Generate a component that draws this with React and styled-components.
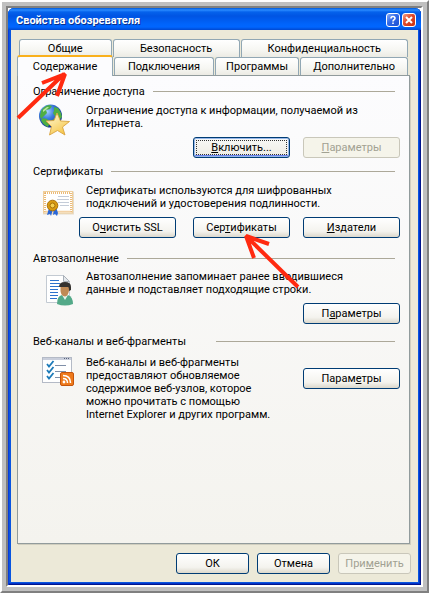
import React from 'react';
import styled, { createGlobalStyle, css } from 'styled-components';

const GlobalStyle = createGlobalStyle`
  * {
    box-sizing: border-box;
  }

  body {
    margin: 0;
    background: #fff;
    color: #000;
    font: 11px/13px Roboto, Tahoma, sans-serif;
  }

  button {
    font: inherit;
    color: inherit;
    padding: 0;
    margin: 0;
  }
`;

const Frame = styled.div`
  position: relative;
  display: flex;
  min-height: 100vh;
  padding: 4px;
  background: #c0c0c0;
  border: 2px solid;
  border-color: #fff #808080 #808080 #fff;
`;

const FrameInner = styled.div`
  flex: 1;
  display: flex;
  min-width: 0;
  border: 2px solid;
  border-color: #808080 #fff #fff #808080;
  background: #fff;
`;

const Window = styled.div`
  flex: 1;
  display: flex;
  flex-direction: column;
  min-width: 0;
  padding: 0 3px 3px;
  border-radius: 6px 6px 0 0;
  background: #0855e0;
  box-shadow: inset 1px 0 #0a3bd8, inset -1px -1px #00138c, inset -2px -2px #0033c8;
`;

const TitleBar = styled.header`
  display: flex;
  align-items: center;
  gap: 2px;
  height: 22px;
  margin: 0 -3px;
  padding: 2px 5px 0 8px;
  border-radius: 6px 6px 0 0;
  background: linear-gradient(#0058d8 0, #2a8bff 2px, #0562ec 4px, #0054e3 8px, #0064fb 16px, #0066ff 19px, #0048d0 22px);
`;

const Title = styled.h1`
  flex: 1;
  margin: 0;
  color: #fff;
  font-size: 11px;
  font-weight: bold;
  white-space: nowrap;
  text-shadow: 1px 1px #0a2f8c;
`;

const CaptionButton = styled.button`
  width: 14px;
  height: 14px;
  border: 1px solid #fff;
  border-radius: 3px;
  background: ${props => (props.$close
    ? 'linear-gradient(135deg, #f0a088, #e0482a 45%, #c83010)'
    : 'linear-gradient(135deg, #8aaef8, #3068e8 45%, #1c50d0)')};

  svg {
    display: block;
  }
`;

const Content = styled.main`
  flex: 1;
  display: flex;
  flex-direction: column;
  padding: 9px 7px 8px 6px;
  background: #ece9d8;
`;

const TabRow = styled.div`
  display: flex;
  gap: 1px;
  height: 18px;
  margin: 0 3px 0 ${props => (props.$front ? 0 : 2)}px;
`;

const Tab = styled.button`
  flex: ${props => props.$grow} 1 0;
  min-width: 0;
  border: 1px solid #91a7b4;
  border-bottom: 0;
  border-radius: 3px 3px 0 0;
  background: linear-gradient(#fff, #f6f6f2 60%, #ecebe4);
  white-space: nowrap;

  ${props => props.$active && css`
    position: relative;
    z-index: 1;
    height: 21px;
    margin-top: -2px;
    border-top: 2px solid #f9b01c;
    background: #fcfcfe;
  `}
`;

const Panel = styled.div`
  flex: 1;
  margin-right: 1px;
  padding: 8px 9px 8px 15px;
  border: 1px solid #919b9c;
  background: linear-gradient(#fcfcfe, #f4f3ee);
  box-shadow: 1px 1px #d0cebf;
`;

const Section = styled.section`
  margin-bottom: ${props => props.$gap}px;
`;

const SectionTitle = styled.h2`
  display: flex;
  align-items: center;
  gap: ${props => props.$lineGap || 8}px;
  height: 14px;
  margin: 0 5px 0 0;
  font-size: 11px;
  font-weight: normal;

  &::after {
    content: '';
    flex: 1;
    height: 1px;
    background: #aca899;
  }
`;

const SectionBody = styled.div`
  display: grid;
  grid-template-columns: 46px 1fr;
  padding-top: ${props => props.$top}px;
`;

const IconCell = styled.div`
  grid-row: span 2;
  height: 0;
  padding: ${props => props.$pad};

  svg {
    display: block;
  }
`;

const Description = styled.p`
  margin: 0 0 7px;
  padding-left: 7px;
`;

const Side = styled.div`
  display: flex;
  justify-content: space-between;

  button {
    margin-top: 12px;
  }
`;

const Actions = styled.div`
  display: flex;
  justify-content: flex-end;
  gap: 13px;
`;

const Button = styled.button`
  flex: none;
  width: ${props => (props.$small ? 73 : 97)}px;
  height: 21px;
  margin-right: ${props => (props.$start ? 'auto' : 0)};
  border: 1px solid #003c74;
  border-radius: 3px;
  background: linear-gradient(#fff, #f4f3ee 70%, #dcd8cc);
  white-space: nowrap;

  ${props => props.$focused && css`
    background: linear-gradient(#f8f8f6, #f0efe8 80%, #e4e2da);
    box-shadow: inset 0 0 0 1px #98b8ea, inset 0 -2px #6982ee;
    outline: 1px dotted #333;
    outline-offset: -4px;
  `}

  &:disabled {
    border-color: #c9c7ba;
    background: #f5f4ea;
    color: #a1a192;
  }
`;

const Footer = styled.footer`
  display: flex;
  justify-content: flex-end;
  gap: 8px;
  margin-top: 9px;
`;

const Arrow = styled.svg`
  position: absolute;
  left: ${props => props.$left}px;
  top: ${props => props.$top}px;
  z-index: 2;
  fill: none;
  stroke: #ff2a10;
  stroke-width: 4;
  stroke-linejoin: bevel;
  pointer-events: none;
`;

const GlobeIcon = () => (
  <svg width="32" height="32" viewBox="0 0 32 32" aria-hidden="true">
    <defs>
      <radialGradient id="globe" cx=".35" cy=".3" r=".75">
        <stop offset="0" stopColor="#a9d2ff" />
        <stop offset=".4" stopColor="#3f7fe0" />
        <stop offset="1" stopColor="#0b2c86" />
      </radialGradient>
      <linearGradient id="star" x2=".6" y2="1">
        <stop offset="0" stopColor="#fffde0" />
        <stop offset="1" stopColor="#f6c74c" />
      </linearGradient>
    </defs>
    <circle cx="12.5" cy="12" r="11.5" fill="url(#globe)" />
    <path d="M3 7q3-5 8-6l3 1-2 3-4 1 1 3-3 3-3 3-1-3zM5 14l4 1 3 3-2 5q-5-2-7-7zM16 3l4 1 3 5 1 4-3 3-3-2-3-5 1-2zM15 15l4 1-2 5-3 2z" fill="#4fae43" />
    <path d="M5 6l4-3 2 0-3 3-3 2z" fill="#b9e6a0" />
    <path d="M19 9l3.500 8 9 .5-7 5.500 2.500 8-7.500-4.500-8 4.500 2-8.500-5.500-5.500 8-.5z" fill="url(#star)" stroke="#d9a441" strokeWidth=".9" strokeLinejoin="round" />
  </svg>
);

const CertificateIcon = () => (
  <svg width="33" height="27" viewBox="0 0 33 27" aria-hidden="true">
    <rect x="1" y="1.500" width="31" height="23" fill="#e6dccb" />
    <rect x="1.500" y="1.500" width="29" height="21.500" fill="#fff" stroke="#efcf9c" />
    <rect x="3" y="3" width="26" height="18.500" fill="none" stroke="#e5a44c" strokeWidth="1.500" strokeDasharray="1 1" />
    <path d="M16 6.500h11M15 9.500h12M16 12.500h11M18 15.500h9" stroke="#c4ccd8" />
    <path d="M7 18l-2 7 3-1 1 2 2-7zM12 18l-1 7 2-1 2 2 1-3-2-6z" fill="#2a67d8" />
    <circle cx="10.500" cy="15.500" r="5.300" fill="#d99b12" stroke="#a86f08" />
    <circle cx="10.500" cy="15.500" r="2.500" fill="#f6cf4e" stroke="#a86f08" />
  </svg>
);

const PersonIcon = () => (
  <svg width="28" height="32" viewBox="0 0 28 32" aria-hidden="true">
    <path d="M.5.500h17l6 6v21H.5z" fill="#fff" stroke="#c3cad2" />
    <path d="M17.500.500v6h6z" fill="#e4e8ec" stroke="#a9b0b8" />
    <path d="M4 5.500h9M4 8.500h10M4 11.500h9M4 14.500h8M4 17.500h8M4 20.500h8M4 23.500h7" stroke="#2d72cc" />
    <path d="M11 29q0-8 5-9h6q5 2 5 9-8 3-16 0z" fill="#53a988" />
    <path d="M16 20l3 5 3-5z" fill="#e9f4ee" />
    <path d="M14.500 10h8.500v6q-1 5-4 5.500-4-.5-4.500-5.500z" fill="#c08a55" />
    <path d="M13 12q0-5 6-5t6 5v3l-2 1q0-4-1-4h-5z" fill="#35322f" />
  </svg>
);

const FeedIcon = () => (
  <svg width="33" height="30" viewBox="0 0 33 30" aria-hidden="true">
    <rect x=".5" y=".5" width="29" height="25" fill="#fff" stroke="#b4bac6" />
    <rect x="1" y="1" width="28" height="2" fill="#c9cedb" />
    <path d="M22 1.500h1M24 1.500h1M26 1.500h1" stroke="#59627a" />
    <path d="M13 8.500h11M13 14.500h11M13 20.500h6" stroke="#7f8fa8" />
    <path d="M5 7l2 2.500L11.500 4M5 13l2 2.500L11.500 10M5 19l2 2.500L11.500 16" fill="none" stroke="#1c7ab8" strokeWidth="1.800" />
    <rect x="18.500" y="15.500" width="13" height="13" rx="1.500" fill="#ee7a1c" stroke="#c4540c" />
    <circle cx="22" cy="25" r="1.400" fill="#fff" />
    <path d="M21 21.500q4.500 0 4.500 4.500M21 18.500q7.500 0 7.500 7.500" fill="none" stroke="#fff" strokeWidth="1.500" />
  </svg>
);

const App = () => (
  <>
    <GlobalStyle />
    <Frame>
      <FrameInner>
        <Window>
          <TitleBar>
            <Title>Свойства обозревателя</Title>
            <CaptionButton aria-label="Справка">
              <svg width="12" height="12" viewBox="0 0 12 12" fill="none" stroke="#fff" strokeWidth="1.600">
                <path d="M4 4.500Q4 2.500 6 2.500T8 4.300Q8 5.200 7 5.700T6 7.500M6 8.600V10" />
              </svg>
            </CaptionButton>
            <CaptionButton $close aria-label="Закрыть">
              <svg width="12" height="12" viewBox="0 0 12 12" fill="none" stroke="#fff" strokeWidth="2">
                <path d="M3 3l6 6M9 3l-6 6" />
              </svg>
            </CaptionButton>
          </TitleBar>
          <Content>
            <TabRow>
              <Tab $grow={92}>Общие</Tab>
              <Tab $grow={127}>Безопасность</Tab>
              <Tab $grow={168}>Конфиденциальность</Tab>
            </TabRow>
            <TabRow $front>
              <Tab $grow={96} $active>Содержание</Tab>
              <Tab $grow={100}>Подключения</Tab>
              <Tab $grow={84}>Программы</Tab>
              <Tab $grow={108}>Дополнительно</Tab>
            </TabRow>
            <Panel>
              <Section $gap={6}>
                <SectionTitle>Ограничение доступа</SectionTitle>
                <SectionBody $top={6}>
                  <IconCell $pad="0 0 0 5px"><GlobeIcon /></IconCell>
                  <Description>
                    Ограничение доступа к информации, получаемой из<br />Интернета.
                  </Description>
                  <Actions>
                    <Button $focused><u>В</u>ключить...</Button>
                    <Button disabled><u>П</u>араметры</Button>
                  </Actions>
                </SectionBody>
              </Section>
              <Section $gap={13}>
                <SectionTitle>Сертификаты</SectionTitle>
                <SectionBody $top={6}>
                  <IconCell $pad="6px 0 0 9px"><CertificateIcon /></IconCell>
                  <Description>
                    Сертификаты используются для шифрованных<br />подключений и удостоверения подлинности.
                  </Description>
                  <Actions>
                    <Button $start>О<u>ч</u>истить SSL</Button>
                    <Button>Сер<u>т</u>ификаты</Button>
                    <Button><u>И</u>здатели</Button>
                  </Actions>
                </SectionBody>
              </Section>
              <Section $gap={10}>
                <SectionTitle>Автозаполнение</SectionTitle>
                <SectionBody $top={5}>
                  <IconCell $pad="5px 0 0 13px"><PersonIcon /></IconCell>
                  <Description>
                    Автозаполнение запоминает ранее вводившиеся<br />данные и подставляет подходящие строки.
                  </Description>
                  <Actions>
                    <Button>П<u>а</u>раметры</Button>
                  </Actions>
                </SectionBody>
              </Section>
              <Section $gap={0}>
                <SectionTitle $lineGap={30}>Веб-каналы и веб-фрагменты</SectionTitle>
                <SectionBody $top={8}>
                  <IconCell $pad="1px 0 0 9px"><FeedIcon /></IconCell>
                  <Side>
                    <Description>
                      Веб-каналы и веб-фрагменты<br />предоставляют обновляемое<br />содержимое веб-узлов, которое<br />
                      можно прочитать с помощью<br />Internet Explorer и других программ.
                    </Description>
                    <Button>Парам<u>е</u>тры</Button>
                  </Side>
                </SectionBody>
              </Section>
            </Panel>
            <Footer>
              <Button $small>ОК</Button>
              <Button $small>Отмена</Button>
              <Button $small disabled>При<u>м</u>енить</Button>
            </Footer>
          </Content>
        </Window>
      </FrameInner>
      <Arrow $left={14} $top={68} width="56" height="54" aria-hidden="true">
        <path d="M2 48L48 4M26 13L49 4L41 26" />
      </Arrow>
      <Arrow $left={240} $top={230} width="62" height="60" aria-hidden="true">
        <path d="M56 55L5 5M27 12L4 4L12 26" />
      </Arrow>
    </Frame>
  </>
);

export default App;
